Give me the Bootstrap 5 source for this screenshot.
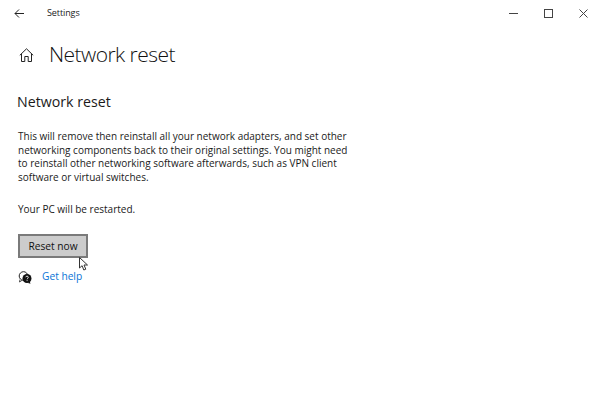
<!DOCTYPE html>
<html lang="en">
<head>
    <meta charset="UTF-8">
    <meta name="viewport" content="width=device-width, initial-scale=1.0">
    <title>Settings</title>
    <link href="https://cdn.jsdelivr.net/npm/bootstrap@5.3.3/dist/css/bootstrap.min.css" rel="stylesheet">
    <style>
        body { font-family: "Open Sans", "Liberation Sans", sans-serif; color: #1a1a1a; background: #fff; overflow: hidden; }
        .title-bar { height: 26px; padding-left: 14px; }
        .title-text { font-size: 9px; margin-left: 23px; letter-spacing: -.1px; }
        .win-btns { width: 91px; padding-right: 12px; }
        .page-head { padding: 16px 0 0 19px; height: 56px; }
        .home-icon { margin-top: 6px; }
        .page-title { font-size: 21px; font-weight: 300; margin: 0 0 0 15px; line-height: 24px; letter-spacing: -.55px; color: #111; }
        .page-body { padding: 0 0 0 18px; }
        .section-title { font-size: 14.2px; font-weight: 400; margin: 10px 0 0 -1px; line-height: 20px; }
        .desc-text { font-size: 10px; line-height: 13.6px; width: 332px; margin: 18px 0 0; }
        .restart-text { font-size: 10px; line-height: 14px; margin: 18px 0 0; }
        .reset-btn { width: 70px; height: 24px; margin-top: 18px; padding: 0; font-size: 10.2px; color: #111; background: #ccc; border: 2px solid #7a7a7a; border-radius: 0; }
        .reset-btn:hover { background: #ccc; border-color: #7a7a7a; color: #111; }
        .help-row { margin-top: 11px; }
        .help-link { font-size: 10.2px; color: #0a74d6; text-decoration: none; margin-left: 10px; }
        .btn-holder { position: relative; width: 70px; }
        .cursor-icon { position: absolute; left: 61px; top: 41px; }
    </style>
</head>
<body>
<!-- Title bar -->
<div class="title-bar d-flex align-items-center justify-content-between">
    <div class="d-flex align-items-center">
        <svg width="10" height="9" viewBox="0 0 10 9" fill="none" stroke="#222" stroke-width="1"><path d="M10 4.5H1M5 .5 1 4.5l4 4"/></svg>
        <span class="title-text">Settings</span>
    </div>
    <div class="win-btns d-flex align-items-center justify-content-between">
        <svg width="9" height="9" viewBox="0 0 9 9" stroke="#444" fill="none"><path d="M0 4.5h9"/></svg>
        <svg width="9" height="9" viewBox="0 0 9 9" stroke="#444" fill="none"><rect x=".5" y=".5" width="8" height="8"/></svg>
        <svg width="9" height="9" viewBox="0 0 9 9" stroke="#444" fill="none"><path d="M.5.5l8 8M8.5.5l-8 8"/></svg>
    </div>
</div>

<!-- Page heading -->
<div class="page-head d-flex align-items-start">
    <svg class="home-icon" width="15" height="14" viewBox="0 0 15 14" fill="none" stroke="#222" stroke-width="1"><path d="M.8 7.3 7.5.8l6.7 6.5M2.5 5.8v7.7h3.3V8.5h3.4v5h3.3V5.8"/></svg>
    <h1 class="page-title">Network reset</h1>
</div>

<!-- Content -->
<div class="page-body">
    <h2 class="section-title">Network reset</h2>
    <p class="desc-text">This will remove then reinstall all your network adapters, and set other networking components back to their original settings. You might need to reinstall other networking software afterwards, such as VPN client software or virtual switches.</p>
    <p class="restart-text">Your PC will be restarted.</p>
    <div class="btn-holder">
        <button type="button" class="btn reset-btn">Reset now</button>
        <svg class="cursor-icon" width="10" height="14" viewBox="0 0 10 14"><path d="M.5.5v10.5l2.6-2.3 1.7 4.3 2-.8-1.8-4.2h3.5z" fill="#fff" stroke="#333" stroke-width="1"/></svg>
    </div>
    <div class="help-row d-flex align-items-center">
        <svg width="14" height="13" viewBox="0 0 14 13"><circle cx="5.5" cy="5" r="4.3" fill="#fff" stroke="#222"/><path d="M2 8.5 1.5 11 4 9.3" fill="#fff" stroke="#222" stroke-width=".8"/><circle cx="9" cy="7.5" r="4.5" fill="#111"/><path d="M10 12l2.5.8-.8-2.5z" fill="#111"/><path d="M7.7 6.2c.2-1.4 2.6-1.4 2.6.1 0 1-1.2 1-1.2 2M9.1 9.2v.9" fill="none" stroke="#fff" stroke-width=".9"/></svg>
        <a href="#" class="help-link">Get help</a>
    </div>
</div>

<script src="https://cdn.jsdelivr.net/npm/bootstrap@5.3.3/dist/js/bootstrap.bundle.min.js"></script>
</body>
</html>
